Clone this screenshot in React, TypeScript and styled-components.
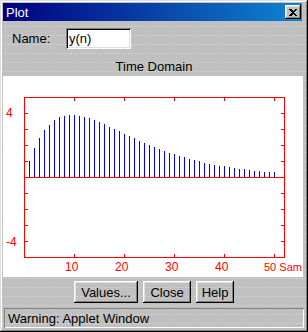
import React from "react";
import styled, { createGlobalStyle } from "styled-components";

const GlobalStyle = createGlobalStyle`
  html, body {
    margin: 0;
    padding: 0;
    background: #c0c0c0;
  }
  body {
    font-family: "Liberation Sans", Arial, sans-serif;
  }
`;

const raised = `
  box-shadow: inset -1px -1px #000, inset 1px 1px #fff,
    inset -2px -2px #808080, inset 2px 2px #dfdfdf;
`;

const Window = styled.div`
  width: 308px;
  height: 332px;
  box-sizing: border-box;
  padding: 3px 3px 4px 3px;
  display: flex;
  flex-direction: column;
  background-color: #c0c0c0;
  background-image: linear-gradient(#c0c0c0 8px, transparent 8px),
    linear-gradient(90deg, #c0c0c0 2px, #dcdcdc 2px);
  background-size: 100% 9px, 3px 100%;
  box-shadow: inset -1px -1px #000, inset 1px 1px #dfdfdf,
    inset -2px -2px #808080, inset 2px 2px #fff;
`;

const TitleBar = styled.div`
  height: 18px;
  margin-right: 3px;
  padding: 0 1px 0 3px;
  display: flex;
  align-items: center;
  justify-content: space-between;
  background: linear-gradient(90deg, #000080, #1084d0);
  color: #fff;
  font-size: 13px;
`;

const CloseButton = styled.div`
  width: 16px;
  height: 14px;
  display: flex;
  align-items: center;
  justify-content: center;
  background: #c0c0c0;
  ${raised}
`;

const NameRow = styled.div`
  height: 35px;
  display: flex;
  align-items: center;
  padding-left: 9px;
  font-size: 13px;
  color: #000;
`;

const Label = styled.span`
  width: 54px;
`;

const Field = styled.div`
  width: 65px;
  height: 21px;
  box-sizing: border-box;
  padding: 3px 0 0 3px;
  background: #fff;
  box-shadow: inset 1px 1px #808080, inset -1px -1px #fff,
    inset 2px 2px #000, inset -2px -2px #dfdfdf;
`;

const Heading = styled.div`
  height: 20px;
  display: flex;
  align-items: center;
  justify-content: center;
  font-size: 13px;
  color: #000;
`;

const PlotPanel = styled.div`
  height: 201px;
  margin-right: 2px;
  background: #fff;
  overflow: hidden;
`;

const ButtonRow = styled.div`
  height: 31px;
  box-sizing: border-box;
  padding-top: 4px;
  display: flex;
  justify-content: center;
  gap: 5px;
`;

const Button = styled.div<{ $w: number }>`
  width: ${(p) => p.$w}px;
  height: 22px;
  display: flex;
  align-items: center;
  justify-content: center;
  font-size: 13px;
  color: #000;
  background: transparent;
  ${raised}
`;

const StatusBar = styled.div`
  height: 20px;
  margin: 0 1px;
  box-sizing: border-box;
  padding-left: 4px;
  display: flex;
  align-items: center;
  font-size: 13px;
  color: #000;
  box-shadow: inset 1px 1px #808080, inset -1px -1px #fff;
`;

const RED = "#ff0000";
const BLUE = "#0000ff";

// y(n) = n * 0.9^(n-1), 16px per unit, 5px per sample
const Chart = () => {
  const x0 = 24;
  const zero = 177;
  const stems = [];
  for (let n = 1; n <= 50; n++) {
    const v = n * Math.pow(0.9, n - 1);
    const x = x0 + 5 * n + 0.5;
    stems.push(
      <line key={n} x1={x} x2={x} y1={zero} y2={zero - Math.round(v * 16)} stroke={BLUE} />
    );
  }
  const yTicks = [113, 129, 145, 161, 193, 209, 225, 241];
  const xTicks = [74, 124, 174, 224, 274];
  return (
    <svg width="300" height="201" shapeRendering="crispEdges">
      <g transform="translate(-3,-76)">
        <rect x={24.5} y={97.5} width={260} height={160} fill="none" stroke={RED} />
        <line x1={24} x2={284} y1={zero + 0.5} y2={zero + 0.5} stroke={RED} />
        {yTicks.map((y) => (
          <g key={y}>
            <line x1={24} x2={28} y1={y + 0.5} y2={y + 0.5} stroke={RED} />
            <line x1={281} x2={285} y1={y + 0.5} y2={y + 0.5} stroke={RED} />
          </g>
        ))}
        {xTicks.map((x) => (
          <g key={x}>
            <line x1={x + 0.5} x2={x + 0.5} y1={97} y2={101} stroke={RED} />
            <line x1={x + 0.5} x2={x + 0.5} y1={254} y2={258} stroke={RED} />
          </g>
        ))}
        {stems}
        <g fill={RED} fontSize="12" fontFamily='"Liberation Sans", Arial, sans-serif'>
          <text x={6} y={117}>4</text>
          <text x={6} y={246}>-4</text>
          <text x={65} y={271}>10</text>
          <text x={115} y={271}>20</text>
          <text x={165} y={271}>30</text>
          <text x={215} y={271}>40</text>
          <text x={264} y={271} fontSize="11">50 Sam</text>
        </g>
      </g>
    </svg>
  );
};

const App = () => {
  return (
    <>
      <GlobalStyle />
      <Window>
        <TitleBar>
          <span>Plot</span>
          <CloseButton>
            <svg width="8" height="7" viewBox="0 0 8 7" shapeRendering="crispEdges">
              <path d="M0 0h2l2 2 2-2h2L5 3.5 8 7H6L4 5 2 7H0l3-3.5z" fill="#000" />
            </svg>
          </CloseButton>
        </TitleBar>
        <NameRow>
          <Label>Name:</Label>
          <Field>y(n)</Field>
        </NameRow>
        <Heading>Time Domain</Heading>
        <PlotPanel>
          <Chart />
        </PlotPanel>
        <ButtonRow>
          <Button $w={64}>Values...</Button>
          <Button $w={48}>Close</Button>
          <Button $w={38}>Help</Button>
        </ButtonRow>
        <StatusBar>Warning: Applet Window</StatusBar>
      </Window>
    </>
  );
};

export default App;
